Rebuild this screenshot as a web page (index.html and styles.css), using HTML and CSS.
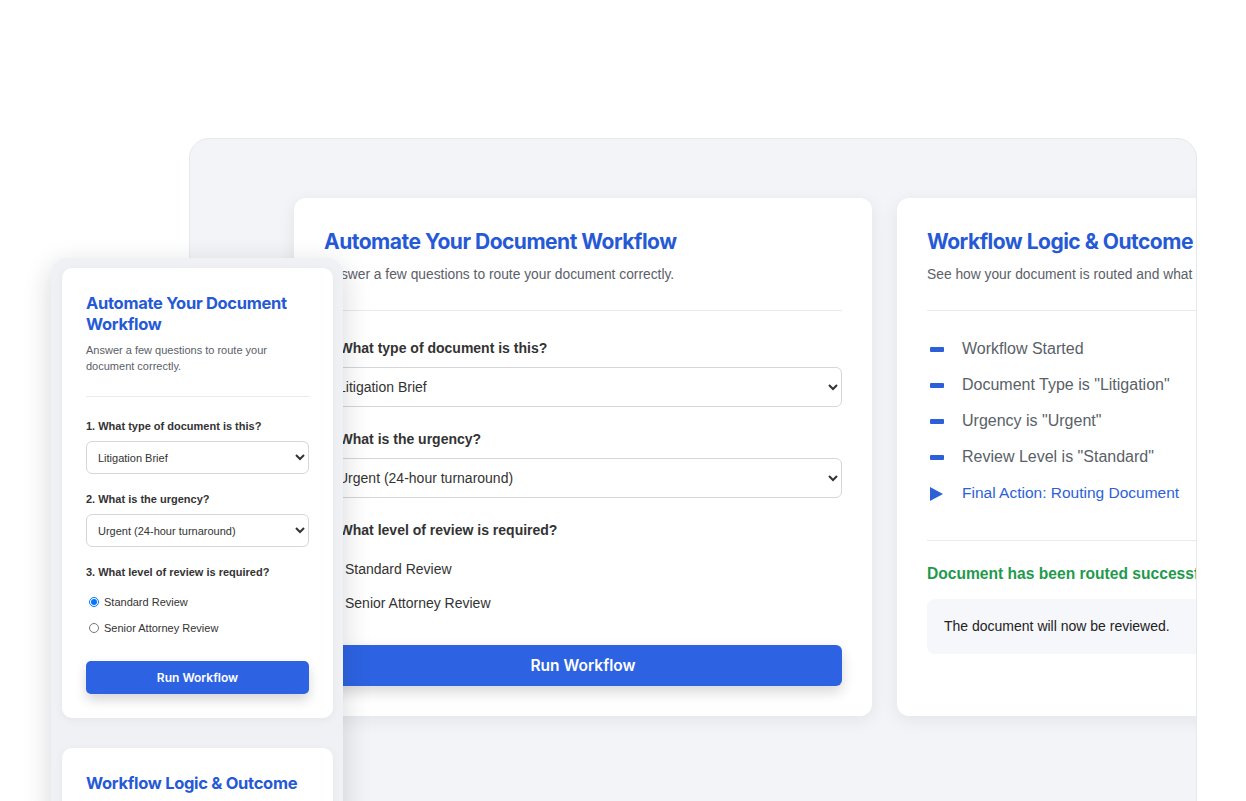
FILE: index.html
```html
<!DOCTYPE html>
<html>
  <head>
    <title>Document Workflow</title>
    <link rel="stylesheet" href="styles.css">
  </head>
  <body>
    <div class="stage">

      <!-- desktop view -->
      <div class="desktop">
        <div class="desk-row">
          <div class="card">
            <div class="card-head">
              <h2 class="title">Automate Your Document Workflow</h2>
              <p class="sub">Answer a few questions to route your document correctly.</p>
            </div>
            <form class="wf-form" action="">
              <label class="q">1. What type of document is this?</label>
              <select class="pick">
                <option>Litigation Brief</option>
                <option>Contract</option>
              </select>
              <label class="q">2. What is the urgency?</label>
              <select class="pick">
                <option>Urgent (24-hour turnaround)</option>
                <option>Normal</option>
              </select>
              <label class="q">3. What level of review is required?</label>
              <div class="radios">
                <label class="opt"><input type="radio" name="lvl-d" checked> Standard Review</label>
                <label class="opt"><input type="radio" name="lvl-d"> Senior Attorney Review</label>
              </div>
              <button class="run" type="button">Run Workflow</button>
            </form>
          </div>

          <div class="card">
            <div class="card-head">
              <h2 class="title">Workflow Logic &amp; Outcome</h2>
              <p class="sub">See how your document is routed and what happens next.</p>
            </div>
            <ul class="steps">
              <li><span class="dash"></span>Workflow Started</li>
              <li><span class="dash"></span>Document Type is "Litigation"</li>
              <li><span class="dash"></span>Urgency is "Urgent"</li>
              <li><span class="dash"></span>Review Level is "Standard"</li>
              <li class="final"><span class="arrow"></span>Final Action: Routing Document</li>
            </ul>
            <p class="ok">Document has been routed successfully!</p>
            <div class="note">The document will now be reviewed.</div>
          </div>
        </div>
      </div>

      <!-- mobile view -->
      <div class="phone">
        <div class="m-card">
          <h2 class="m-title">Automate Your Document Workflow</h2>
          <p class="m-sub">Answer a few questions to route your document correctly.</p>
          <form class="m-form" action="">
            <label class="m-q">1. What type of document is this?</label>
            <select class="m-pick">
              <option>Litigation Brief</option>
            </select>
            <label class="m-q">2. What is the urgency?</label>
            <select class="m-pick">
              <option>Urgent (24-hour turnaround)</option>
            </select>
            <label class="m-q">3. What level of review is required?</label>
            <div class="m-radios">
              <label class="m-opt"><input type="radio" name="lvl-m" checked> Standard Review</label>
              <label class="m-opt"><input type="radio" name="lvl-m"> Senior Attorney Review</label>
            </div>
            <button class="m-run" type="button">Run Workflow</button>
          </form>
        </div>
        <div class="m-card">
          <h2 class="m-title">Workflow Logic &amp; Outcome</h2>
        </div>
      </div>

    </div>
  </body>
</html>
```

FILE: styles.css
```css
body { margin: 0; background: #fff; overflow: hidden; font-family: "Liberation Sans", Arial, sans-serif; }

.stage { position: relative; width: 1246px; height: 801px; overflow: hidden; }

/* desktop window */
.desktop { position: absolute; left: 189px; top: 138px; width: 1006px; height: 720px; background: #f3f4f7; border: 1px solid #e6e8ec; border-radius: 20px; overflow: hidden; }
.desk-row { display: flex; gap: 25px; padding: 59px 0 0 104px; }

.card { flex: 0 0 518px; background: #fff; border-radius: 12px; padding: 30px; box-shadow: 0 4px 18px rgba(20, 30, 60, 0.07); }
.card-head { border-bottom: 1px solid #e7e9ee; padding-bottom: 25px; }
.title { margin: 0; font-family: Inter, sans-serif; font-weight: 700; font-size: 21px; line-height: 28px; color: #2559d6; letter-spacing: -0.5px; white-space: nowrap; }
.sub { margin: 9px 0 0; font-size: 13.8px; line-height: 20px; color: #5b6069; white-space: nowrap; }

.wf-form { display: flex; flex-direction: column; padding-top: 27px; }
.q { font-size: 14px; line-height: 20px; font-weight: bold; color: #333; }
.pick { margin: 9px 0 22px; height: 40px; padding: 0 9px; border: 1px solid #d3d6db; border-radius: 6px; background: #fff; font-family: "Liberation Sans", Arial, sans-serif; font-size: 14px; color: #333; }
.radios { display: flex; flex-direction: column; gap: 10px; margin-top: 17px; }
.opt { display: flex; align-items: center; gap: 8px; height: 24px; font-size: 14px; color: #333; }
.opt input { margin: 0; width: 13px; height: 13px; }
.run { margin-top: 30px; height: 41px; border: none; border-radius: 6px; background: #2d63e2; color: #fff; font-family: Inter, sans-serif; font-weight: 600; font-size: 15.5px; box-shadow: 0 6px 14px rgba(0, 0, 0, 0.16); }

.steps { list-style: none; margin: 0; padding: 27px 0 36px; border-bottom: 1px solid #e7e9ee; display: flex; flex-direction: column; gap: 14px; }
.steps li { display: flex; align-items: center; font-size: 16px; line-height: 22px; color: #5a5f68; white-space: nowrap; }
.dash { width: 14px; height: 5px; border-radius: 1px; background: #2d5fd8; margin: 0 18px 0 3px; }
.arrow { width: 0; height: 0; border-left: 13px solid #2d5fd8; border-top: 7px solid transparent; border-bottom: 7px solid transparent; margin: 2px 19px 0 3px; }
.steps .final { color: #2d5fd8; font-size: 15.5px; }
.ok { margin: 22px 0 0; font-size: 15.6px; line-height: 22px; font-weight: bold; color: #1f9a4c; white-space: nowrap; }
.note { margin-top: 14px; background: #f6f7fb; border-radius: 8px; padding: 18px 17px; font-size: 14px; line-height: 19px; color: #222; white-space: nowrap; }

/* mobile window */
.phone { position: absolute; left: 51px; top: 258px; box-sizing: border-box; width: 292px; height: 560px; padding: 10px 10px 0 11px; background: #f0f1f4; border-radius: 16px 16px 0 0; box-shadow: 0 8px 28px rgba(20, 25, 40, 0.18); display: flex; flex-direction: column; gap: 30px; }
.m-card { background: #fff; border-radius: 10px; padding: 25px 24px 24px; box-shadow: 0 2px 10px rgba(20, 30, 60, 0.05); }
.m-title { margin: 0; font-family: Inter, sans-serif; font-weight: 700; font-size: 16.5px; line-height: 21px; color: #2559d6; letter-spacing: -0.3px; }
.m-sub { margin: 7px 0 0; padding-bottom: 22px; border-bottom: 1px solid #e7e9ee; font-size: 11px; line-height: 16px; color: #5b6069; }

.m-form { display: flex; flex-direction: column; padding-top: 21px; }
.m-q { font-size: 11px; line-height: 16px; font-weight: bold; color: #333; }
.m-pick { margin: 7px 0 17px; height: 33px; padding: 0 7px; border: 1px solid #d3d6db; border-radius: 6px; background: #fff; font-family: "Liberation Sans", Arial, sans-serif; font-size: 11px; color: #333; }
.m-radios { display: flex; flex-direction: column; gap: 8px; margin-top: 13px; }
.m-opt { display: flex; align-items: center; gap: 5px; height: 18px; padding-left: 3px; font-size: 11px; color: #333; }
.m-opt input { margin: 0; width: 10px; height: 10px; }
.m-run { margin-top: 24px; height: 33px; border: none; border-radius: 5px; background: #2d63e2; color: #fff; font-family: Inter, sans-serif; font-weight: 600; font-size: 12px; box-shadow: 0 6px 12px rgba(0, 0, 0, 0.16); }
```
